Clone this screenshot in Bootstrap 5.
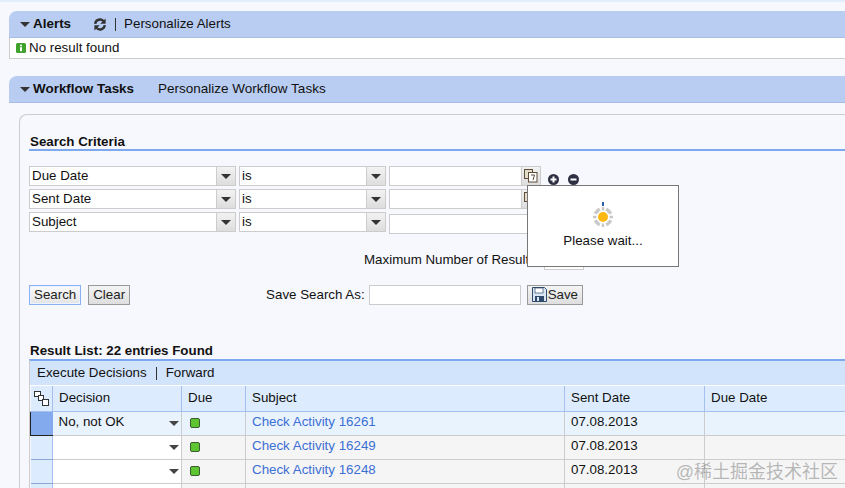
<!DOCTYPE html>
<html lang="en">
<head>
<meta charset="utf-8">
<title>Workflow Tasks</title>
<link href="https://cdn.jsdelivr.net/npm/bootstrap@5.3.0/dist/css/bootstrap.min.css" rel="stylesheet">
<style>
html,body{height:488px;overflow:hidden}
body{background:#f7f8fd;border-top:2px solid #e3edfd;font-family:"Liberation Sans",Arial,sans-serif;font-size:13.33px;line-height:16px;color:#111;padding:9px 0 0 9px;position:relative}
.tray-head{background:#b9cdf2;height:27px;display:flex;align-items:center;padding-left:11px;border-top-left-radius:8px;border-bottom:1px solid #a9bee6}
.caret-dn{width:0;height:0;border:5px solid transparent;border-top:5px solid #333;border-bottom:0;margin-right:3px}
.tray-title{font-weight:700;font-size:13.45px}
.tray-link{font-size:13.5px;margin-left:24px}
.refresh-ico{margin-left:23px}
.tray-msg{background:#fff;height:21px;display:flex;align-items:center;gap:3px;padding-left:6px;border-left:1px solid #ccc;border-bottom:1px solid #ccc;margin-bottom:17px}
.vsep{width:1px;height:13px;background:#333;margin:0 8px 0 9px}
.main-panel{margin:11px 0 0 10px;border:1px solid #ccc;border-right:0;border-top-left-radius:8px;padding:19px 0 0 9px;height:380px;position:relative}
.sec-title{font-weight:700;font-size:13.33px;height:17px;border-bottom:2px solid #7fa9ef;line-height:15px;white-space:nowrap;padding-left:1px}
.crit-rows{margin-top:15px;display:flex;flex-direction:column;gap:3px;height:70px}
.crit-row{display:flex;gap:3px;height:20px}
.combo{display:flex;border:1px solid #ccc;background:#fff;height:20px;padding-left:2px;line-height:17px}
.combo-txt{flex:1;overflow:hidden;white-space:nowrap}
.combo-btn{width:19px;background:linear-gradient(#f2f2f2,#ddd);border-left:1px solid #ccc;display:flex;align-items:center;justify-content:center}
.w-a{width:207px}.w-b{width:147px}.w-c{width:152px}
.low-row{margin-top:2px}
.addrem{display:flex;gap:7px;margin:7px 0 0 3px;height:13px}
.max-row{display:flex;height:20px;padding-left:335px;margin-top:14px;align-items:center}
.txt-box{display:block;background:#fff;border:1px solid #ccc;height:20px}
.box-max{width:40px}.box-save{width:152px}
.act-row{display:flex;align-items:center;height:21px;margin-top:14px}
.sap-btn{background:linear-gradient(#f4f4f4,#dedede);border:1px solid #999;height:20px;padding:0 4px;line-height:17px;display:flex;align-items:center;color:#222}
.sap-btn-on{border-color:#8ab1f0;background:linear-gradient(#fafafa,#e4e4e4);box-shadow:inset 0 0 0 1px #eef4ff}
.clear-btn{margin-left:7px}
.save-btn{margin-left:6px;padding:0 4px}
.save-ico{margin-right:1px}
.save-lbl{margin-left:136px;margin-right:4px}
.result-title{margin-top:37px;height:16px;border:0;line-height:17px}
.result-wrap{border-top:2px solid #7fa9ef;border-left:1px solid #ccc;margin-top:1px}
.res-bar{height:25px;background:#d2e4fb;display:flex;align-items:center;padding-left:7px;border-bottom:1px solid #fff}
.vsep-b{width:1px;height:13px;background:#333;margin:0 9px}
.res-grid{width:815px;border-collapse:collapse;table-layout:fixed}
.c1{width:22px}.c2{width:129px}.c3{width:64px}.c4{width:319px}.c5{width:140px}.c6{width:141px}
.res-grid th{font-weight:400;background:#dcecfe;height:25px;padding:0 6px;border-right:1px solid #a5c0ee;border-bottom:1px solid #a5c0ee}
.res-grid td{height:24px;padding:0 6px 2px;background:#f5f5f5;border-right:1px solid #ccc;border-bottom:1px solid #ccc;white-space:nowrap;overflow:hidden}
.res-grid tr.row-on td{background:#e9f3fe}
.res-grid td.sel-cell{padding:0;background:#dcecfe;border-right:1px solid #a5c0ee;border-bottom:1px solid #8aa9d8;border-top:1px solid #fff}
.res-grid tr.row-on td.sel-cell{background:#84aaee;border:0;border-left:1px solid #222;border-top:1px solid #222;border-bottom:1px solid #222}
.res-grid td.dec-cell{background:#fff;position:relative}
.res-grid tr.row-on td.dec-cell{background:#e9f3fe}
.dec-caret{position:absolute;right:2px;top:9px;width:0;height:0;border:5px solid transparent;border-top:5px solid #444;border-bottom:0}
.led{display:block;width:10px;height:10px;background:#5cc530;border:1px solid #3c5a33;border-radius:2px;margin:2px 0 0 2px}
.lnk{color:#3b6fd4}
.wait-pop{position:absolute;left:507px;top:70px;width:152px;height:82px;background:#fff;border:1px solid #777;text-align:center;padding-top:16px;z-index:5}
.wait-pop svg{display:block;margin:0 auto 2px}
.wm{position:absolute;right:7px;top:460px;font-family:"Liberation Sans","Noto Sans CJK SC",sans-serif;font-size:18px;line-height:20px;color:rgba(120,120,120,.5);white-space:nowrap}
</style>
</head>
<body>
<div class="tray-head">
  <span class="caret-dn"></span><span class="tray-title">Alerts</span>
  <svg class="refresh-ico" width="12" height="13" viewBox="0 0 12 13"><path d="M1.2 5.8A4.8 4.8 0 0 1 9.6 3.2" fill="none" stroke="#333" stroke-width="2.4"/><path d="M11.6.4V5.8H6.2z" fill="#333"/><path d="M10.8 7.2A4.8 4.8 0 0 1 2.4 9.8" fill="none" stroke="#333" stroke-width="2.4"/><path d="M.4 12.6V7.2H5.8z" fill="#333"/></svg>
  <span class="vsep"></span><span>Personalize Alerts</span>
</div>
<div class="tray-msg">
  <svg width="10" height="10" viewBox="0 0 10 10"><rect width="10" height="10" rx="1.5" fill="#3ea22c"/><rect x="4" y="1.7" width="2" height="1.6" fill="#fff"/><rect x="4" y="4.2" width="2" height="4" fill="#fff"/></svg>
  <span>No result found</span>
</div>
<div class="tray-head">
  <span class="caret-dn"></span><span class="tray-title">Workflow Tasks</span>
  <span class="tray-link">Personalize Workflow Tasks</span>
</div>
<div class="main-panel">
  <div class="sec-title">Search Criteria</div>
  <div class="crit-rows">
    <div class="crit-row">
      <div class="combo w-a"><span class="combo-txt">Due Date</span><span class="combo-btn"><span class="caret-dn m-0"></span></span></div>
      <div class="combo w-b"><span class="combo-txt">is</span><span class="combo-btn"><span class="caret-dn m-0"></span></span></div>
      <div class="combo w-c"><span class="combo-txt"></span><span class="combo-btn">
        <svg width="14" height="14" viewBox="0 0 14 14"><rect x=".5" y=".5" width="8" height="9" fill="#e4dccb" stroke="#5d4c38"/><rect x="4.5" y="3.5" width="8.5" height="9.5" fill="#fff" stroke="#5d4c38"/><path d="M7 6h3.5l-1.5 5" fill="none" stroke="#5d4c38"/></svg></span></div>
      <div class="addrem">
        <svg width="13" height="13" viewBox="0 0 13 13"><circle cx="6.5" cy="6.5" r="5.5" fill="#2f2f44"/><path d="M3.5 6.5h6M6.5 3.5v6" stroke="#fff" stroke-width="2"/></svg>
        <svg width="13" height="13" viewBox="0 0 13 13"><circle cx="6.5" cy="6.5" r="5.5" fill="#2f2f44"/><path d="M3.5 6.5h6" stroke="#fff" stroke-width="2"/></svg>
      </div>
    </div>
    <div class="crit-row">
      <div class="combo w-a"><span class="combo-txt">Sent Date</span><span class="combo-btn"><span class="caret-dn m-0"></span></span></div>
      <div class="combo w-b"><span class="combo-txt">is</span><span class="combo-btn"><span class="caret-dn m-0"></span></span></div>
      <div class="combo w-c"><span class="combo-txt"></span><span class="combo-btn">
        <svg width="14" height="14" viewBox="0 0 14 14"><rect x=".5" y=".5" width="8" height="9" fill="#e4dccb" stroke="#5d4c38"/><rect x="4.5" y="3.5" width="8.5" height="9.5" fill="#fff" stroke="#5d4c38"/></svg></span></div>
    </div>
    <div class="crit-row">
      <div class="combo w-a"><span class="combo-txt">Subject</span><span class="combo-btn"><span class="caret-dn m-0"></span></span></div>
      <div class="combo w-b"><span class="combo-txt">is</span><span class="combo-btn"><span class="caret-dn m-0"></span></span></div>
      <div class="combo w-c low-row"><span class="combo-txt"></span></div>
    </div>
  </div>
  <div class="max-row"><span>Maximum Number of Results:</span><span class="txt-box box-max ms-1"></span></div>
  <div class="act-row">
    <button type="button" class="sap-btn sap-btn-on">Search</button>
    <button type="button" class="sap-btn clear-btn">Clear</button>
    <span class="save-lbl">Save Search As:</span>
    <span class="txt-box box-save"></span>
    <button type="button" class="sap-btn save-btn">
      <svg class="save-ico" width="15" height="15" viewBox="0 0 15 15"><path d="M.5.5h12l2 2v12H.5z" fill="#dbe6f4" stroke="#2f4a6a"/><rect x="3" y="1" width="8" height="5" fill="#fff" stroke="#2f4a6a" stroke-width=".7"/><rect x="3" y="9" width="9" height="5.5" fill="#2f4a6a"/><rect x="5" y="10" width="2" height="4" fill="#dbe6f4"/></svg>Save</button>
  </div>
  <div class="sec-title result-title">Result List: 22 entries Found</div>
  <div class="result-wrap">
    <div class="res-bar"><span>Execute Decisions</span><span class="vsep-b"></span><span>Forward</span></div>
    <table class="res-grid">
      <colgroup><col class="c1"><col class="c2"><col class="c3"><col class="c4"><col class="c5"><col class="c6"></colgroup>
      <thead><tr>
        <th class="p-0 text-center"><svg width="15" height="15" viewBox="0 0 15 15"><rect x=".5" y=".5" width="6" height="5" fill="#fff" stroke="#333"/><rect x="4.5" y="4.5" width="5" height="5" fill="#fff" stroke="#333"/><rect x="8.5" y="8.5" width="6" height="6" fill="#fff" stroke="#333"/></svg></th>
        <th>Decision</th><th>Due</th><th>Subject</th><th>Sent Date</th><th>Due Date</th>
      </tr></thead>
      <tbody>
        <tr class="row-on"><td class="sel-cell"></td><td class="dec-cell">No, not OK<span class="dec-caret"></span></td><td><span class="led"></span></td><td><span class="lnk">Check Activity 16261</span></td><td>07.08.2013</td><td></td></tr>
        <tr><td class="sel-cell"></td><td class="dec-cell"><span class="dec-caret"></span></td><td><span class="led"></span></td><td><span class="lnk">Check Activity 16249</span></td><td>07.08.2013</td><td></td></tr>
        <tr><td class="sel-cell"></td><td class="dec-cell"><span class="dec-caret"></span></td><td><span class="led"></span></td><td><span class="lnk">Check Activity 16248</span></td><td>07.08.2013</td><td></td></tr>
        <tr><td class="sel-cell"></td><td class="dec-cell"><span class="dec-caret"></span></td><td><span class="led"></span></td><td><span class="lnk">Check Activity 16247</span></td><td>07.08.2013</td><td></td></tr>
      </tbody>
    </table>
  </div>
  <div class="wait-pop">
    <svg width="24" height="29" viewBox="0 0 24 29"><g stroke="#c8c8c8" stroke-width="2.4"><path d="M12 5v3.500M12 21.500V25M2 15h3.500M18.500 15H22M5 8l2.500 2.500M19 8l-2.500 2.500M5 22l2.500-2.500M19 22l-2.500-2.500M7 6.400l1.500 2.800M17 6.400l-1.500 2.800M7 23.600l1.500-2.800M17 23.600l-1.500-2.800M3.400 10l2.800 1.500M20.600 10l-2.800 1.500M3.400 20l2.800-1.500M20.600 20l-2.800-1.500"/></g><path d="M12 0v4" stroke="#2f5fa6" stroke-width="2"/><circle cx="12" cy="15" r="5" fill="#fdb813"/></svg>
    Please wait...
  </div>
</div>
<div class="wm">@稀土掘金技术社区</div>
</body>
</html>
